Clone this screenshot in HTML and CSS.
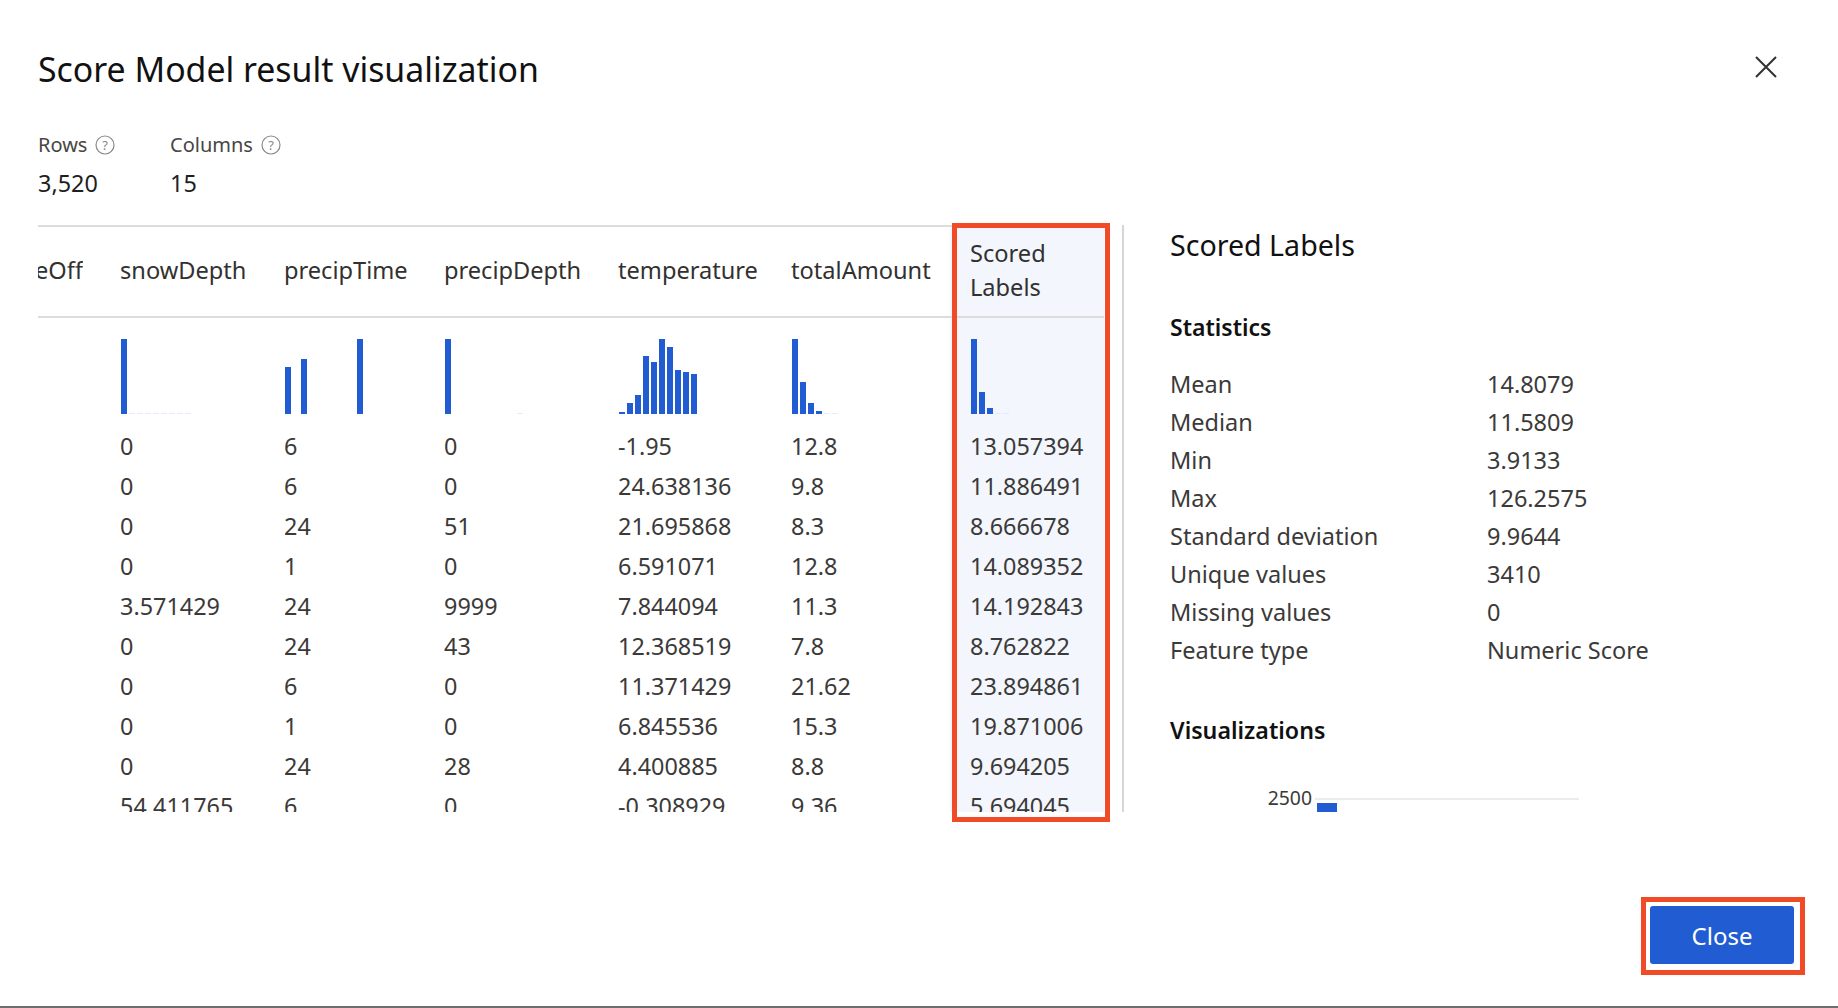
FILE: index.html
```html
<!DOCTYPE html>
<html lang="en">
<head>
<meta charset="utf-8">
<title>Score Model result visualization</title>
<link rel="stylesheet" href="styles.css">
</head>
<body>
<div class="modal">
  <header class="head">
    <h1 class="title">Score Model result visualization</h1>
    <button class="x" aria-label="Close dialog"><svg width="22" height="22" viewBox="0 0 22 22"><path d="M1 1 21 21M21 1 1 21" fill="none" stroke="#323130" stroke-width="2"/></svg></button>
  </header>
  <div class="summary">
    <div class="stat stat-rows">
      <div class="stat-label">Rows <svg class="help" width="20" height="20" viewBox="0 0 20 20"><circle cx="10" cy="10" r="9" fill="none" stroke="#8a8886" stroke-width="1.2"/><text x="10" y="14.5" text-anchor="middle" class="help-q">?</text></svg></div>
      <div class="stat-value">3,520</div>
    </div>
    <div class="stat">
      <div class="stat-label">Columns <svg class="help" width="20" height="20" viewBox="0 0 20 20"><circle cx="10" cy="10" r="9" fill="none" stroke="#8a8886" stroke-width="1.2"/><text x="10" y="14.5" text-anchor="middle" class="help-q">?</text></svg></div>
      <div class="stat-value">15</div>
    </div>
  </div>
  <div class="content">
    <div class="table">
      <div class="col col-a">
        <div class="th"><span class="th-clip">eOff</span></div>
      </div>
      <div class="col col-b">
        <div class="th">snowDepth</div>
        <div class="hist"><i style="height:75px"></i><i class="f" style="height:1px"></i><i class="f" style="height:1px"></i><i class="f" style="height:1px"></i><i class="f" style="height:1px"></i><i class="f" style="height:1px"></i><i class="f" style="height:1px"></i><i class="f" style="height:1px"></i><i class="f" style="height:1px"></i></div>
        <div class="td">0</div><div class="td">0</div><div class="td">0</div><div class="td">0</div><div class="td">3.571429</div><div class="td">0</div><div class="td">0</div><div class="td">0</div><div class="td">0</div><div class="td">54.411765</div>
      </div>
      <div class="col col-c">
        <div class="th">precipTime</div>
        <div class="hist"><i style="height:47px"></i><b></b><i style="height:55px"></i><b></b><b></b><b></b><b></b><b></b><b></b><i style="height:75px"></i></div>
        <div class="td">6</div><div class="td">6</div><div class="td">24</div><div class="td">1</div><div class="td">24</div><div class="td">24</div><div class="td">6</div><div class="td">1</div><div class="td">24</div><div class="td">6</div>
      </div>
      <div class="col col-d">
        <div class="th">precipDepth</div>
        <div class="hist"><i style="height:75px"></i><b></b><b></b><b></b><b></b><b></b><b></b><b></b><b></b><i class="f" style="height:1px"></i></div>
        <div class="td">0</div><div class="td">0</div><div class="td">51</div><div class="td">0</div><div class="td">9999</div><div class="td">43</div><div class="td">0</div><div class="td">0</div><div class="td">28</div><div class="td">0</div>
      </div>
      <div class="col col-e">
        <div class="th">temperature</div>
        <div class="hist"><i style="height:2px"></i><i style="height:11px"></i><i style="height:19px"></i><i style="height:58px"></i><i style="height:52px"></i><i style="height:75px"></i><i style="height:67px"></i><i style="height:44px"></i><i style="height:42px"></i><i style="height:40px"></i></div>
        <div class="td">-1.95</div><div class="td">24.638136</div><div class="td">21.695868</div><div class="td">6.591071</div><div class="td">7.844094</div><div class="td">12.368519</div><div class="td">11.371429</div><div class="td">6.845536</div><div class="td">4.400885</div><div class="td">-0.308929</div>
      </div>
      <div class="col col-f">
        <div class="th">totalAmount</div>
        <div class="hist"><i style="height:75px"></i><i style="height:32px"></i><i style="height:11px"></i><i style="height:3px"></i><i class="f" style="height:1px"></i><i class="f" style="height:1px"></i></div>
        <div class="td">12.8</div><div class="td">9.8</div><div class="td">8.3</div><div class="td">12.8</div><div class="td">11.3</div><div class="td">7.8</div><div class="td">21.62</div><div class="td">15.3</div><div class="td">8.8</div><div class="td">9.36</div>
      </div>
      <div class="col col-g">
        <div class="th">Scored<br>Labels</div>
        <div class="hist"><i style="height:75px"></i><i style="height:22px"></i><i style="height:6px"></i><i class="f" style="height:1px"></i><i class="f" style="height:1px"></i></div>
        <div class="td">13.057394</div><div class="td">11.886491</div><div class="td">8.666678</div><div class="td">14.089352</div><div class="td">14.192843</div><div class="td">8.762822</div><div class="td">23.894861</div><div class="td">19.871006</div><div class="td">9.694205</div><div class="td">5.694045</div>
      </div>
      <div class="mark mark-col"></div>
    </div>
    <aside class="side">
      <h2 class="side-title">Scored Labels</h2>
      <h3 class="sec">Statistics</h3>
      <dl class="stats">
        <dt>Mean</dt><dd>14.8079</dd>
        <dt>Median</dt><dd>11.5809</dd>
        <dt>Min</dt><dd>3.9133</dd>
        <dt>Max</dt><dd>126.2575</dd>
        <dt>Standard deviation</dt><dd>9.9644</dd>
        <dt>Unique values</dt><dd>3410</dd>
        <dt>Missing values</dt><dd>0</dd>
        <dt>Feature type</dt><dd>Numeric Score</dd>
      </dl>
      <h3 class="sec sec-viz">Visualizations</h3>
      <div class="viz">
        <span class="tick">2500</span>
        <div class="plot"><div class="bar"></div></div>
      </div>
    </aside>
  </div>
  <footer class="foot">
    <div class="close-wrap"><button class="close">Close</button></div>
  </footer>
</div>
</body>
</html>
```
FILE: styles.css
```css
* { box-sizing: border-box; }
html, body { margin: 0; padding: 0; background: #fff; }
body { font-family: "Noto Sans", "Open Sans", sans-serif; color: #323130; }
.modal { width: 1838px; height: 1008px; overflow: hidden; display: flex; flex-direction: column; border-bottom: 2px solid #6e6e6e; }

.head { display: flex; justify-content: space-between; align-items: center; height: 134px; padding: 0 61px 0 38px; margin-bottom: -4px; }
.title { margin: 0; font-size: 33.85px; font-weight: 400; color: #111; line-height: 44px; position: relative; top: 2px; }
.x { width: 22px; height: 22px; padding: 0; border: 0; background: none; display: block; }
.x svg { display: block; }

.summary { display: flex; padding: 1px 0 0 38px; height: 95px; }
.stat { display: flex; flex-direction: column; }
.stat-rows { width: 132px; }
.stat-label { display: flex; align-items: center; gap: 8px; font-size: 20px; line-height: 28px; color: #484644; height: 28px; }
.help { display: block; flex: none; }
.help-q { font-size: 13px; fill: #8a8886; font-family: "Noto Sans", sans-serif; }
.stat-value { font-size: 23.4px; line-height: 32px; margin-top: 8px; color: #201f1e; }

.content { display: flex; height: 587px; padding-left: 38px; }
.table { position: relative; display: flex; flex: none; width: 1086px; height: 587px; border-right: 2px solid #d6d6d6; padding-right: 14px; }
.col { display: flex; flex-direction: column; height: 587px; overflow: hidden; flex: none; border-top: 2px solid #dcdcdc; }
.col-a { width: 82px; }
.col-b { width: 164px; }
.col-c { width: 160px; }
.col-d { width: 174px; }
.col-e { width: 173px; }
.col-f { width: 161px; }
.col-g { width: 154px; padding-left: 20px; background: #f3f6fc; margin-left: -2px; }

.th { height: 91px; flex: none; display: flex; align-items: center; padding-bottom: 4px; border-bottom: 2px solid #dcdcdc; font-size: 23.6px; line-height: 34px; color: #323130; margin-bottom: 20px; white-space: nowrap; }
.th-clip { display: block; width: 45px; overflow: hidden; direction: rtl; text-align: right; }
.col-g .th { margin-left: -20px; padding: 9px 0 0 20px; display: block; }

.hist { height: 76px; flex: none; display: flex; align-items: flex-end; gap: 2px; padding-left: 1px; margin-bottom: 12px; }
.hist i { display: block; width: 6px; background: #215cd3; flex: none; }
.hist b { display: block; width: 6px; flex: none; }
.hist i.f { background: #e3eafa; }

.td { height: 40px; flex: none; line-height: 40px; font-size: 23.4px; color: #3b3a39; white-space: nowrap; }

.mark { position: absolute; border: 5px solid #f04a26; pointer-events: none; }
.mark-col { left: 914px; top: -2px; width: 158px; height: 599px; }

.side { padding: 0 0 0 46px; flex: 1; height: 587px; overflow: hidden; }
.side-title { margin: 0; font-size: 28.6px; font-weight: 400; color: #111; line-height: 40px; }
.sec { margin: 43px 0 0; font-size: 23px; font-weight: 600; color: #111; line-height: 38px; }
.stats { display: grid; grid-template-columns: 317px 1fr; margin: 19px 0 0; grid-auto-rows: 38px; font-size: 23.5px; line-height: 38px; color: #3b3a39; }
.stats dt, .stats dd { margin: 0; white-space: nowrap; }
.sec-viz { margin-top: 42px; font-size: 23.2px; }
.viz { display: flex; margin-top: 49px; padding-left: 92px; align-items: flex-start; }
.tick { font-size: 19.4px; line-height: 26px; width: 50px; color: #3b3a39; margin-top: -13px; margin-right: -3px; text-align: right; }
.plot { width: 264px; margin-left: 6px; border-top: 2px solid #ececec; height: 60px; }
.bar { width: 20px; height: 60px; margin: 3px 0 0 2px; background: #215cd3; }

.foot { flex: 1; display: flex; justify-content: flex-end; align-items: flex-start; padding: 0 33px 0 0; }
.close-wrap { margin-top: 85px; padding: 4px; border: 5px solid #f04a26; width: 164px; height: 78px; }
.close { display: block; width: 144px; height: 58px; margin: 0; background: #215cd3; border: 0; border-radius: 3px; color: #fff; font: 400 24px "Noto Sans", sans-serif; }
```
